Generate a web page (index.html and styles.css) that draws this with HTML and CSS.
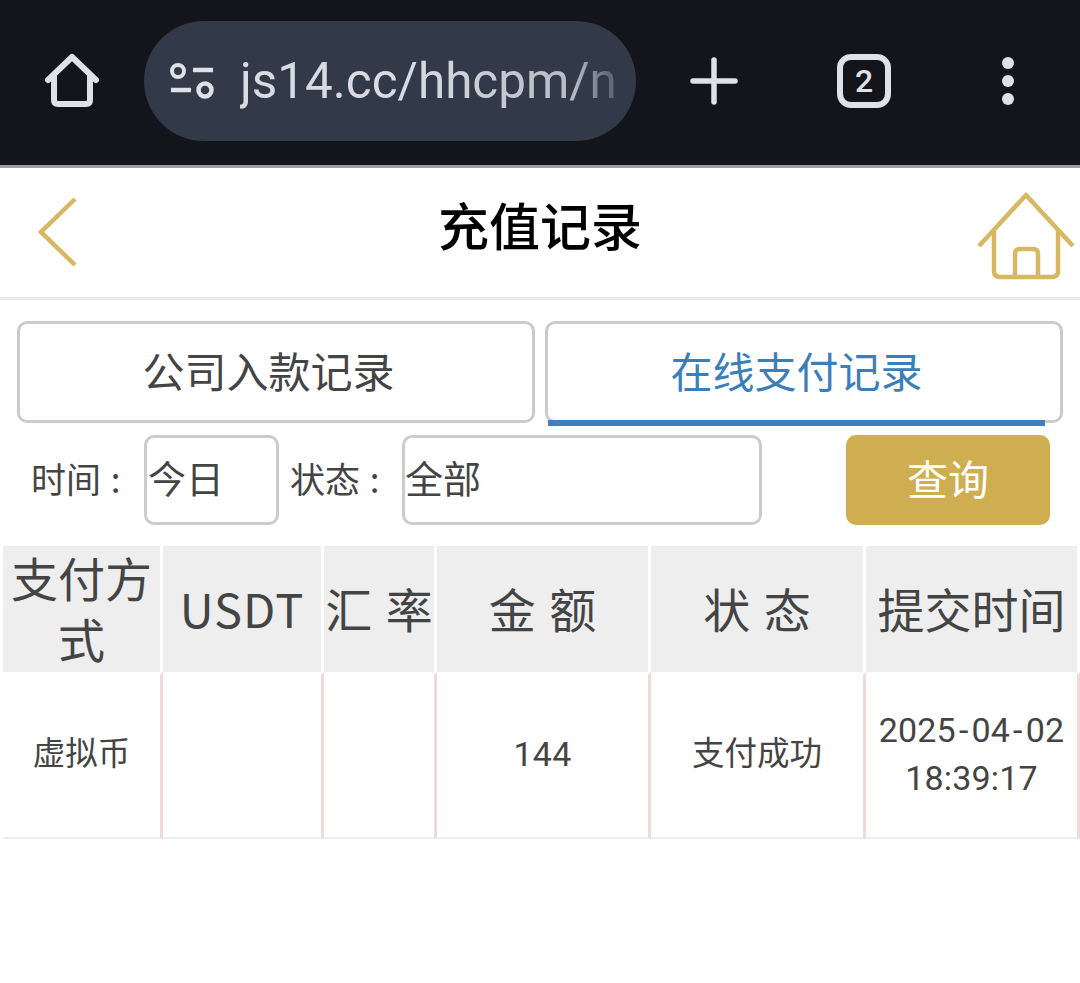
FILE: index.html
```html
<!DOCTYPE html>
<html lang="zh-CN">
<head>
    <meta charset="UTF-8">
    <meta name="viewport" content="width=device-width, initial-scale=1.0">
    <title>充值记录</title>
    <link rel="stylesheet" href="styles.css">
</head>
<body>
    <!-- browser toolbar -->
    <div class="toolbar">
        <svg class="tb-home" width="56" height="56" viewBox="0 0 56 56" fill="none" stroke="#e0e1e6" stroke-width="6" stroke-linejoin="round" stroke-linecap="round">
            <path d="M4 27 L28 4 L52 27"/>
            <path d="M10 23 V47 Q10 51 14 51 H42 Q46 51 46 47 V23"/>
        </svg>
        <div class="url-pill">
            <svg class="tune" width="46" height="36" viewBox="0 0 46 36" fill="none" stroke="#e0e1e6">
                <circle cx="9" cy="8" r="6" stroke-width="4"/>
                <path d="M24 7 H44" stroke-width="4.5"/>
                <path d="M2 27 H22" stroke-width="4.5"/>
                <circle cx="36" cy="27" r="6.5" stroke-width="4.5"/>
            </svg>
            <div class="url-text">js14.cc/hhcpm/n</div>
        </div>
        <svg class="tb-plus" width="48" height="48" viewBox="0 0 48 48" stroke="#e0e1e6" stroke-width="5.5" stroke-linecap="round">
            <path d="M24 3 V45"/>
            <path d="M3 24 H45"/>
        </svg>
        <div class="tab-count">2</div>
        <svg class="tb-more" width="14" height="50" viewBox="0 0 14 50" fill="#e0e1e6">
            <circle cx="7" cy="7" r="6"/>
            <circle cx="7" cy="25" r="6"/>
            <circle cx="7" cy="43" r="6"/>
        </svg>
    </div>

    <!-- page header -->
    <div class="page-head">
        <svg class="back" width="44" height="72" viewBox="0 0 44 72" fill="none" stroke="#d6b863" stroke-width="4.5">
            <path d="M38 3 L4 36 L38 69"/>
        </svg>
        <h1>充值记录</h1>
        <svg class="home" width="98" height="88" viewBox="0 0 98 88" fill="none" stroke="#d6b863" stroke-width="4.5" stroke-linejoin="round">
            <path d="M2 54 L49 3 L96 54"/>
            <path d="M17 37 V79 Q17 85 23 85 H75 Q81 85 81 79 V37"/>
            <path d="M38 85 V62 Q38 57 43 57 H56 Q61 57 61 62 V85"/>
        </svg>
    </div>

    <div class="tabs">
        <div class="tab">公司入款记录</div>
        <div class="tab active">在线支付记录</div>
    </div>

    <div class="filter">
        <span class="label">时间 :</span>
        <div class="select select-time">今日</div>
        <span class="label">状态 :</span>
        <div class="select select-state">全部</div>
        <button class="query">查询</button>
    </div>

    <table class="records">
        <colgroup>
            <col class="c1"><col class="c2"><col class="c3"><col class="c4"><col class="c5"><col class="c6">
        </colgroup>
        <thead>
            <tr>
                <th>支付方式</th>
                <th class="latin">USDT</th>
                <th>汇 率</th>
                <th>金 额</th>
                <th>状 态</th>
                <th>提交时间</th>
            </tr>
        </thead>
        <tbody>
            <tr>
                <td>虚拟币</td>
                <td></td>
                <td></td>
                <td class="num">144</td>
                <td>支付成功</td>
                <td class="num">2025<span class="dash">-</span>04<span class="dash">-</span>02<br>18:39:17</td>
            </tr>
        </tbody>
    </table>
</body>
</html>
```

FILE: styles.css
```css
* { margin: 0; padding: 0; box-sizing: border-box; }
body { background: #fff; font-family: "Noto Sans CJK SC", "Noto Sans", sans-serif; color: #444; }

.toolbar { display: flex; align-items: center; height: 168px; padding-bottom: 4px; background: #13151a; border-bottom: 3px solid #9b9da2; }
.tb-home { margin-left: 44px; flex: none; }
.url-pill { display: flex; align-items: center; width: 492px; height: 120px; margin-left: 44px; padding-left: 25px; background: #323948; border-radius: 60px; flex: none; }
.tune { flex: none; }
.url-text { width: 380px; margin-left: 25px; white-space: nowrap; font-family: Roboto, sans-serif; font-size: 49.4px; color: #d9dbe2; -webkit-mask-image: linear-gradient(to right, #000 45%, rgba(0, 0, 0, 0.8) 88%, rgba(0, 0, 0, 0.3) 97%); mask-image: linear-gradient(to right, #000 45%, rgba(0, 0, 0, 0.8) 88%, rgba(0, 0, 0, 0.3) 97%); }
.tb-plus { margin-left: 54px; flex: none; }
.tab-count { display: flex; align-items: center; justify-content: center; width: 54px; height: 54px; margin-left: 99px; border: 6px solid #e0e1e6; border-radius: 14px; font-family: Roboto, sans-serif; font-weight: 500; font-size: 32px; color: #e0e1e6; flex: none; }
.tb-more { margin-left: 110px; flex: none; }

.page-head { display: grid; grid-template-columns: 1fr auto 1fr; align-items: center; height: 132px; padding: 0 6px 1px; border-bottom: 3px solid #e8e8e8; }
.page-head h1 { margin-bottom: 16px; font-size: 51px; font-weight: 500; color: #000; line-height: 1; }
.back { margin-left: 31px; }
.home { justify-self: end; margin-top: 8px; margin-right: -1px; }

.tabs { display: flex; gap: 10px; padding: 21px 17px 0; }
.tab { position: relative; flex: 1; height: 102px; padding-right: 15px; border: 3px solid #ccc; border-radius: 10px; text-align: center; font-size: 42px; line-height: 92px; color: #444; }
.tab.active { color: #3b7fba; }
.tab.active::after { content: ""; position: absolute; left: 0; right: 15px; bottom: -6px; height: 6px; background: #3d7fbf; }

.filter { display: flex; align-items: center; height: 90px; margin-top: 12px; padding-left: 31px; }
.label { width: 113px; padding-bottom: 6px; font-size: 35px; word-spacing: 2px; color: #444; white-space: nowrap; }
.select { height: 90px; border: 3px solid #ccc; border-radius: 10px; padding-left: 1px; font-size: 38px; line-height: 78px; color: #444; }
.select-time { width: 135px; margin-right: 11px; }
.select-state { width: 360px; margin-left: -1px; padding-left: 0; }
.query { width: 204px; height: 90px; margin-left: 84px; padding-bottom: 6px; background: #ceae50; border: none; border-radius: 10px; font-family: inherit; font-size: 41px; color: #fff; }

.records { width: 1077px; margin: 21px 0 0 3px; border-collapse: separate; border-spacing: 0; table-layout: fixed; }
.c1 { width: 160px; }
.c2 { width: 161px; }
.c3 { width: 113px; }
.c4 { width: 214px; }
.c5 { width: 215px; }
.c6 { width: 214px; }
.records th { height: 126px; padding: 0 0 4px; background: #eee; border-right: 3px solid #fff; font-size: 47px; font-weight: 400; line-height: 61px; color: #444; text-align: center; word-spacing: 3px; }
.records .latin { letter-spacing: 1px; }
.records td { height: 167px; padding-bottom: 10px; border-top: 3px solid #fff; border-right: 3px solid #f0d9d9; border-bottom: 2px solid #eee; font-size: 32.5px; line-height: 48px; text-align: center; color: #444; }
.records .num { padding: 0 10px 5px; font-family: Roboto, sans-serif; font-size: 34px; letter-spacing: 0.2px; }
.dash { padding: 0 3px; }
```
